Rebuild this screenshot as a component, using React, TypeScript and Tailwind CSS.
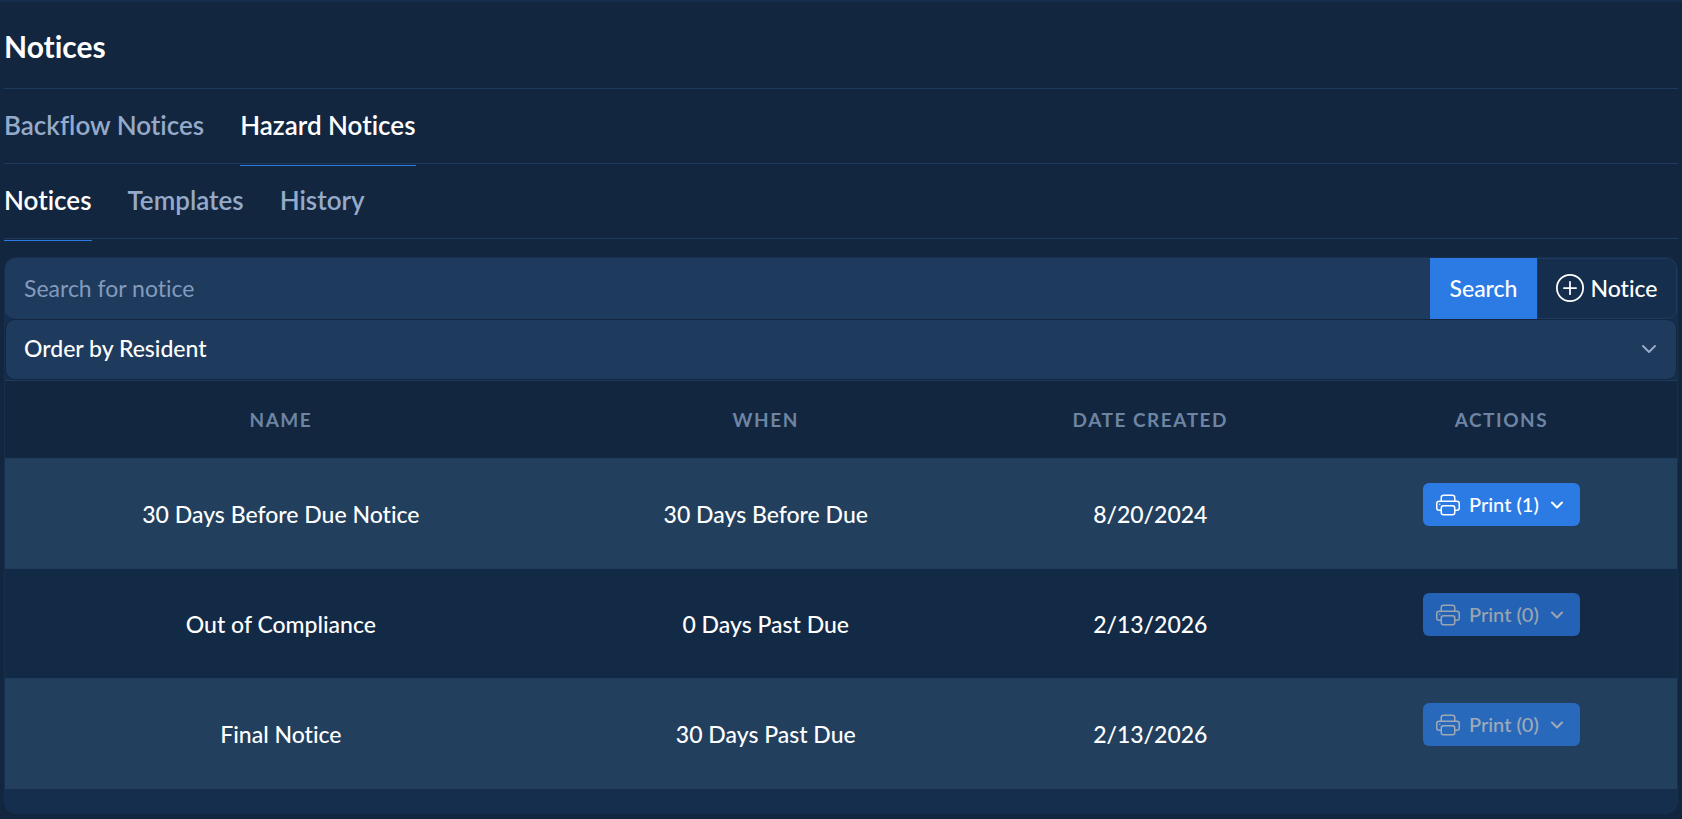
import { useState } from "react";
import { ChevronDown } from "lucide-react";
import { BsPlusCircle, BsPrinter } from "react-icons/bs";

interface Notice {
  name: string;
  when: string;
  created: string;
  count: number;
}

const notices: Notice[] = [
  { name: "30 Days Before Due Notice", when: "30 Days Before Due", created: "8/20/2024", count: 1 },
  { name: "Out of Compliance", when: "0 Days Past Due", created: "2/13/2026", count: 0 },
  { name: "Final Notice", when: "30 Days Past Due", created: "2/13/2026", count: 0 },
];

const columns = [
  { label: "Name", width: "w-[33%]" },
  { label: "When", width: "w-[25%]" },
  { label: "Date Created", width: "w-[21%]" },
  { label: "Actions", width: "w-[21%]" },
];

interface TabsProps {
  label: string;
  tabs: string[];
  active: string;
  onChange: (tab: string) => void;
}

function Tabs({ label, tabs, active, onChange }: TabsProps) {
  return (
    <nav aria-label={label} className="flex h-[75px] gap-9 border-b border-[#1e3a5c]">
      {tabs.map((tab) => (
        <button
          key={tab}
          type="button"
          onClick={() => onChange(tab)}
          className={`-mb-[3px] border-b pb-1 text-[26px] font-semibold leading-8 ${
            tab === active ? "border-[#2c7be5] text-white" : "border-transparent text-[#95aac9]"
          }`}
        >
          {tab}
        </button>
      ))}
    </nav>
  );
}

function PrintButton({ count }: { count: number }) {
  return (
    <button
      type="button"
      disabled={count === 0}
      className="inline-flex h-[43px] items-center rounded-md bg-[#2c7be5] px-[13px] text-[20px] font-medium leading-6 text-white disabled:opacity-70 disabled:text-[#d5d8dc]"
    >
      <BsPrinter size={24} className="mr-[9px]" />
      <span className="pb-[2px]">Print ({count})</span>
      <ChevronDown size={20} strokeWidth={2.5} className="ml-2" />
    </button>
  );
}

export default function App() {
  const [section, setSection] = useState("Hazard Notices");
  const [view, setView] = useState("Notices");
  const [search, setSearch] = useState("");

  return (
    <div className="min-h-screen border-t-2 border-[#152e4d] bg-[#12263f] px-1 font-['Lato',sans-serif] text-[23px] leading-8 text-white [font-variant-ligatures:none]">
      <header className="flex h-[87px] items-center border-b border-[#1e3a5c]">
        <h1 className="pt-[2px] text-[30px] font-bold leading-9">Notices</h1>
      </header>
      <Tabs
        label="Notice type"
        tabs={["Backflow Notices", "Hazard Notices"]}
        active={section}
        onChange={setSection}
      />
      <Tabs
        label="Notice views"
        tabs={["Notices", "Templates", "History"]}
        active={view}
        onChange={setView}
      />

      <main className="mt-[18px] overflow-hidden rounded-xl border border-[#17304f] bg-[#152e4d] pb-6">
        <form className="flex h-[61px]" onSubmit={(e) => e.preventDefault()}>
          <input
            type="text"
            aria-label="Search for notice"
            placeholder="Search for notice"
            value={search}
            onChange={(e) => setSearch(e.target.value)}
            className="min-w-0 flex-1 rounded-l-[10px] bg-[#1e3a5c] px-[19px] pb-[2px] text-white outline-none placeholder:text-[#839bbd]"
          />
          <button type="submit" className="w-[107px] bg-[#2c7be5] pb-[2px] font-medium">
            Search
          </button>
          <button
            type="button"
            className="flex w-[140px] items-center justify-center gap-[6px] rounded-r-[10px] border border-[#1e3a5c] pb-[2px] font-medium"
          >
            <BsPlusCircle size={28} />
            Notice
          </button>
        </form>

        <div className="relative">
          <select
            aria-label="Order notices"
            defaultValue="resident"
            className="block h-[61px] w-full appearance-none rounded-[10px] border border-[#12263f] bg-[#1e3a5c] px-[18px] pb-1 font-medium text-white outline-none"
          >
            <option value="resident">Order by Resident</option>
            <option value="name">Order by Name</option>
          </select>
          <ChevronDown
            size={24}
            className="pointer-events-none absolute right-4 top-[18px] text-[#95aac9]"
          />
        </div>

        <table className="w-full table-fixed border-collapse text-center">
          <thead>
            <tr className="h-[78px] border-t border-[#1e3a5c] bg-[#12263f]">
              {columns.map((column) => (
                <th
                  key={column.label}
                  scope="col"
                  className={`${column.width} text-[19px] font-bold uppercase leading-6 tracking-[0.08em] text-[#6e84a3]`}
                >
                  {column.label}
                </th>
              ))}
            </tr>
          </thead>
          <tbody>
            {notices.map((notice) => (
              <tr
                key={notice.name}
                className="h-[110px] border-t border-[#1e3a5c] bg-[#132a46] font-medium odd:bg-[#223f5e]"
              >
                <td>{notice.name}</td>
                <td>{notice.when}</td>
                <td>{notice.created}</td>
                <td className="pb-[18px]">
                  <div className="flex justify-center">
                    <PrintButton count={notice.count} />
                  </div>
                </td>
              </tr>
            ))}
          </tbody>
        </table>
      </main>
    </div>
  );
}
